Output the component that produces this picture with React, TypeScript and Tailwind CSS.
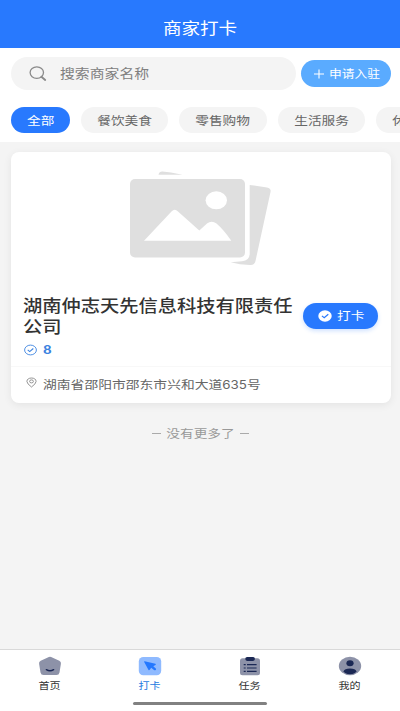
import React from "react";

type WideProps = { children: React.ReactNode; className?: string };

// Text set in an extended width, as the app's display font is.
function Wide({ children, className = "" }: WideProps) {
  return <span className={`inline-block scale-x-[1.16] whitespace-nowrap ${className}`}>{children}</span>;
}

function SearchIcon() {
  return (
    <svg className="h-4 w-[18px] shrink-0" viewBox="0 0 18 16" fill="none" stroke="#8a8a8a">
      <ellipse cx="7.800" cy="6.600" rx="6.700" ry="5.700" strokeWidth="1.300" />
      <path d="M12.400 10.800 16.200 14" strokeWidth="1.900" strokeLinecap="round" />
    </svg>
  );
}

function Placeholder() {
  return (
    <svg className="h-[96px] w-[144px]" viewBox="0 0 144 96" fill="#dfdfdf">
      <path d="M30.500 3.700Q31.300.4 34.500.6L43 1.600 54.500 3.700Z" />
      <path d="M121.700 14 139 16.400Q143.400 17.200 142.500 21L127.500 90Q126.500 94.400 122 94L112 93.200 102.700 91.200 114 90.300Q121.700 89.500 121.700 82.500Z" />
      <rect x="2" y="8" width="115" height="78.500" rx="5" />
      <ellipse cx="88.300" cy="29.300" rx="10.700" ry="9" fill="#fff" />
      <path d="M16 69.700 43.500 40.500Q46.700 37.200 50 40.500L71.300 59.500 79 52.500Q83.700 48.900 88.500 52.500 95.500 58.500 103.300 69.700Z" fill="#fff" />
    </svg>
  );
}

function HomeIcon() {
  return (
    <svg className="h-[20px] w-[24px]" viewBox="0 0 24 20">
      <path d="M9.800 1.400Q12 .3 14.200 1.400L21.300 4.700Q23.300 5.700 22.900 7.700L21.500 16.500Q21 19 18.500 19H5.500Q3 19 2.500 16.500L1.100 7.700Q.7 5.700 2.700 4.700Z" fill="#8d92a8" />
      <path d="M8.400 13.700Q12 15.900 15.600 13.700" stroke="#1b2854" strokeWidth="1.500" fill="none" strokeLinecap="round" />
    </svg>
  );
}

function CheckInIcon() {
  return (
    <svg className="h-[20px] w-[24px]" viewBox="0 0 24 20">
      <rect x=".8" y=".9" width="22.400" height="18.300" rx="4.500" fill="#8fbaff" />
      <path d="M6.700 5.200 17.400 7.800Q18.500 8.300 17.400 8.900L15.300 10.300 17.800 12.600Q18.500 13.300 17.700 14 16.900 14.700 16 13.900L13.200 11.800 11.700 13.800Q11 14.700 10.400 13.700L6.200 6Q5.900 5.100 6.700 5.200Z" fill="#2478ff" />
    </svg>
  );
}

function TaskIcon() {
  return (
    <svg className="h-[20px] w-[24px]" viewBox="0 0 24 20">
      <rect x="2" y="2.300" width="20" height="17" rx="2.500" fill="#8d92a8" />
      <rect x="7.300" y=".9" width="9.600" height="4" rx="1.800" fill="#1b2854" />
      <path d="M5.700 8.700H7.700M9 8.700H18.600M5.700 12H7.700M9 12H18.600M5.700 15.300H7.700M9 15.300H18.600" stroke="#1b2854" strokeWidth="1.200" />
    </svg>
  );
}

function MineIcon() {
  return (
    <svg className="h-[20px] w-[24px]" viewBox="0 0 24 20">
      <ellipse cx="12" cy="10" rx="11.200" ry="9.200" fill="#8d92a8" />
      <ellipse cx="12" cy="7.300" rx="3.600" ry="3" fill="#1b2854" />
      <ellipse cx="12" cy="15.300" rx="6.300" ry="2.900" fill="#1b2854" />
    </svg>
  );
}

const categories = [
  { label: "全部", size: "w-[59px]", active: true },
  { label: "餐饮美食", size: "w-[87px]", active: false },
  { label: "零售购物", size: "w-[88px]", active: false },
  { label: "生活服务", size: "w-[87px]", active: false },
  { label: "休闲娱乐", size: "w-[88px]", active: false },
];

const tabs = [
  { label: "首页", Icon: HomeIcon, active: false },
  { label: "打卡", Icon: CheckInIcon, active: true },
  { label: "任务", Icon: TaskIcon, active: false },
  { label: "我的", Icon: MineIcon, active: false },
];

export default function App() {
  return (
    <div className="flex h-[711px] w-[400px] flex-col overflow-hidden bg-[#f4f4f4] font-['Noto_Sans_CJK_SC',sans-serif]">
      <header className="flex h-12 shrink-0 items-center justify-center bg-[#2879fe] pt-[5px] text-[16px] leading-5 text-white">
        <Wide>商家打卡</Wide>
      </header>

      <section className="h-[94px] shrink-0 bg-white pt-[9px]">
        <div className="flex items-center pl-[11px]">
          <div className="flex h-[33px] w-[285px] items-center gap-[13px] rounded-full bg-[#f4f4f4] pl-[18px] text-[12.8px] leading-5 text-[#808080]">
            <SearchIcon />
            <Wide className="mb-[2px] origin-left">搜索商家名称</Wide>
          </div>
          <button className="ml-[5px] flex h-[27px] w-[90px] items-center rounded-full bg-[#5aabff] pl-[13px] text-[11px] leading-4 text-white">
            <svg className="h-[10px] w-[10px]" viewBox="0 0 10 10" stroke="white" strokeWidth="1.100">
              <path d="M0 5H10M5 .5V9.500" />
            </svg>
            <Wide className="mb-[1px] ml-[5px] origin-left">申请入驻</Wide>
          </button>
        </div>
        <div className="mt-[17px] flex gap-[11px] overflow-hidden pl-[11px]">
          {categories.map((c) => (
            <div
              key={c.label}
              className={`flex h-[26px] shrink-0 items-center justify-center rounded-full text-[11.8px] leading-4 ${c.size} ${
                c.active ? "bg-[#2879fe] text-white" : "bg-[#f4f4f4] text-[#666]"
              }`}
            >
              <Wide>{c.label}</Wide>
            </div>
          ))}
        </div>
      </section>

      <main className="flex-1 px-[11px] pt-[10px]">
        <article className="h-[251px] w-[380px] rounded-[8px] bg-white shadow-[0_2px_9px_rgba(0,0,0,0.07)]">
          <div className="flex h-[134px] pl-[117px] pt-[19px]">
            <Placeholder />
          </div>
          <div className="flex h-[81px] justify-between border-b border-[#f8f8f8] pl-[12px] pr-[13px]">
            <div className="pt-[9px]">
              <h2 className="flex flex-col items-start text-[16.600px] font-medium leading-[20.500px] text-[#333]">
                <Wide className="origin-left">湖南仲志天先信息科技有限责任</Wide>
                <Wide className="origin-left">公司</Wide>
              </h2>
              <div className="mt-[6px] flex items-center gap-[6px] pl-[1px] text-[11.500px] font-bold leading-4 text-[#3c83e0]">
                <svg className="h-[12px] w-[13px]" viewBox="0 0 13 12" fill="none" stroke="#3c83e0" strokeWidth=".9">
                  <ellipse cx="6.500" cy="6" rx="5.900" ry="4.900" />
                  <path d="M3.700 5.900 5.700 7.600 9.300 4.500" strokeWidth="1.100" />
                </svg>
                <Wide className="origin-left font-['Inter',sans-serif]">8</Wide>
              </div>
            </div>
            <button className="mt-[17px] flex h-[26px] w-[75px] shrink-0 items-center rounded-full bg-[#2879fe] pl-[15px] text-[11.800px] leading-4 text-white shadow-[0_2px_4px_rgba(40,121,254,0.22)]">
              <svg className="mb-[1px] h-3 w-[14px]" viewBox="0 0 14 12">
                <ellipse cx="7" cy="6" rx="6.700" ry="5.700" fill="#fff" />
                <path d="M3.900 5.900 6.200 7.800 10.300 4.300" fill="none" stroke="#2879fe" strokeWidth="1.200" />
              </svg>
              <Wide className="mb-[2px] ml-[5px] origin-left">打卡</Wide>
            </button>
          </div>
          <div className="flex items-center pl-[15px] pt-[7px] text-[11.900px] leading-5 text-[#666]">
            <svg className="mb-[6px] h-[11px] w-[11px]" viewBox="0 0 11 11" fill="none" stroke="#888" strokeWidth=".9">
              <path d="M5.500 10Q.9 6.700 .9 4.400C.9 2.300 2.900 1 5.500 1S10.100 2.300 10.100 4.400Q10.100 6.700 5.500 10Z" />
              <ellipse cx="5.500" cy="4.400" rx="1.900" ry="1.500" />
            </svg>
            <Wide className="mb-[1px] ml-[6px] origin-left">
              湖南省邵阳市邵东市兴和大道<span className="font-['Inter',sans-serif] text-[11.500px]">635</span>号
            </Wide>
          </div>
        </article>
        <div className="mt-[20px] flex items-center justify-center gap-[10px] pl-[1px] text-[11.800px] leading-5 text-[#999]">
          <span className="h-px w-[9px] bg-[#aaa]" />
          <Wide>没有更多了</Wide>
          <span className="h-px w-[9px] bg-[#aaa]" />
        </div>
      </main>

      <nav className="h-[62px] shrink-0 border-t border-[#d9d9d9] bg-white">
        <div className="grid h-[52px] grid-cols-4 pt-[6px]">
          {tabs.map(({ label, Icon, active }) => (
            <div
              key={label}
              className={`flex flex-col items-center text-[9.500px] leading-4 ${active ? "text-[#267bdf]" : "text-[#333]"}`}
            >
              <Icon />
              <Wide className="mt-[1px]">{label}</Wide>
            </div>
          ))}
        </div>
        <div className="mx-auto h-[3px] w-[134px] rounded-full bg-[#818181]" />
      </nav>
    </div>
  );
}
